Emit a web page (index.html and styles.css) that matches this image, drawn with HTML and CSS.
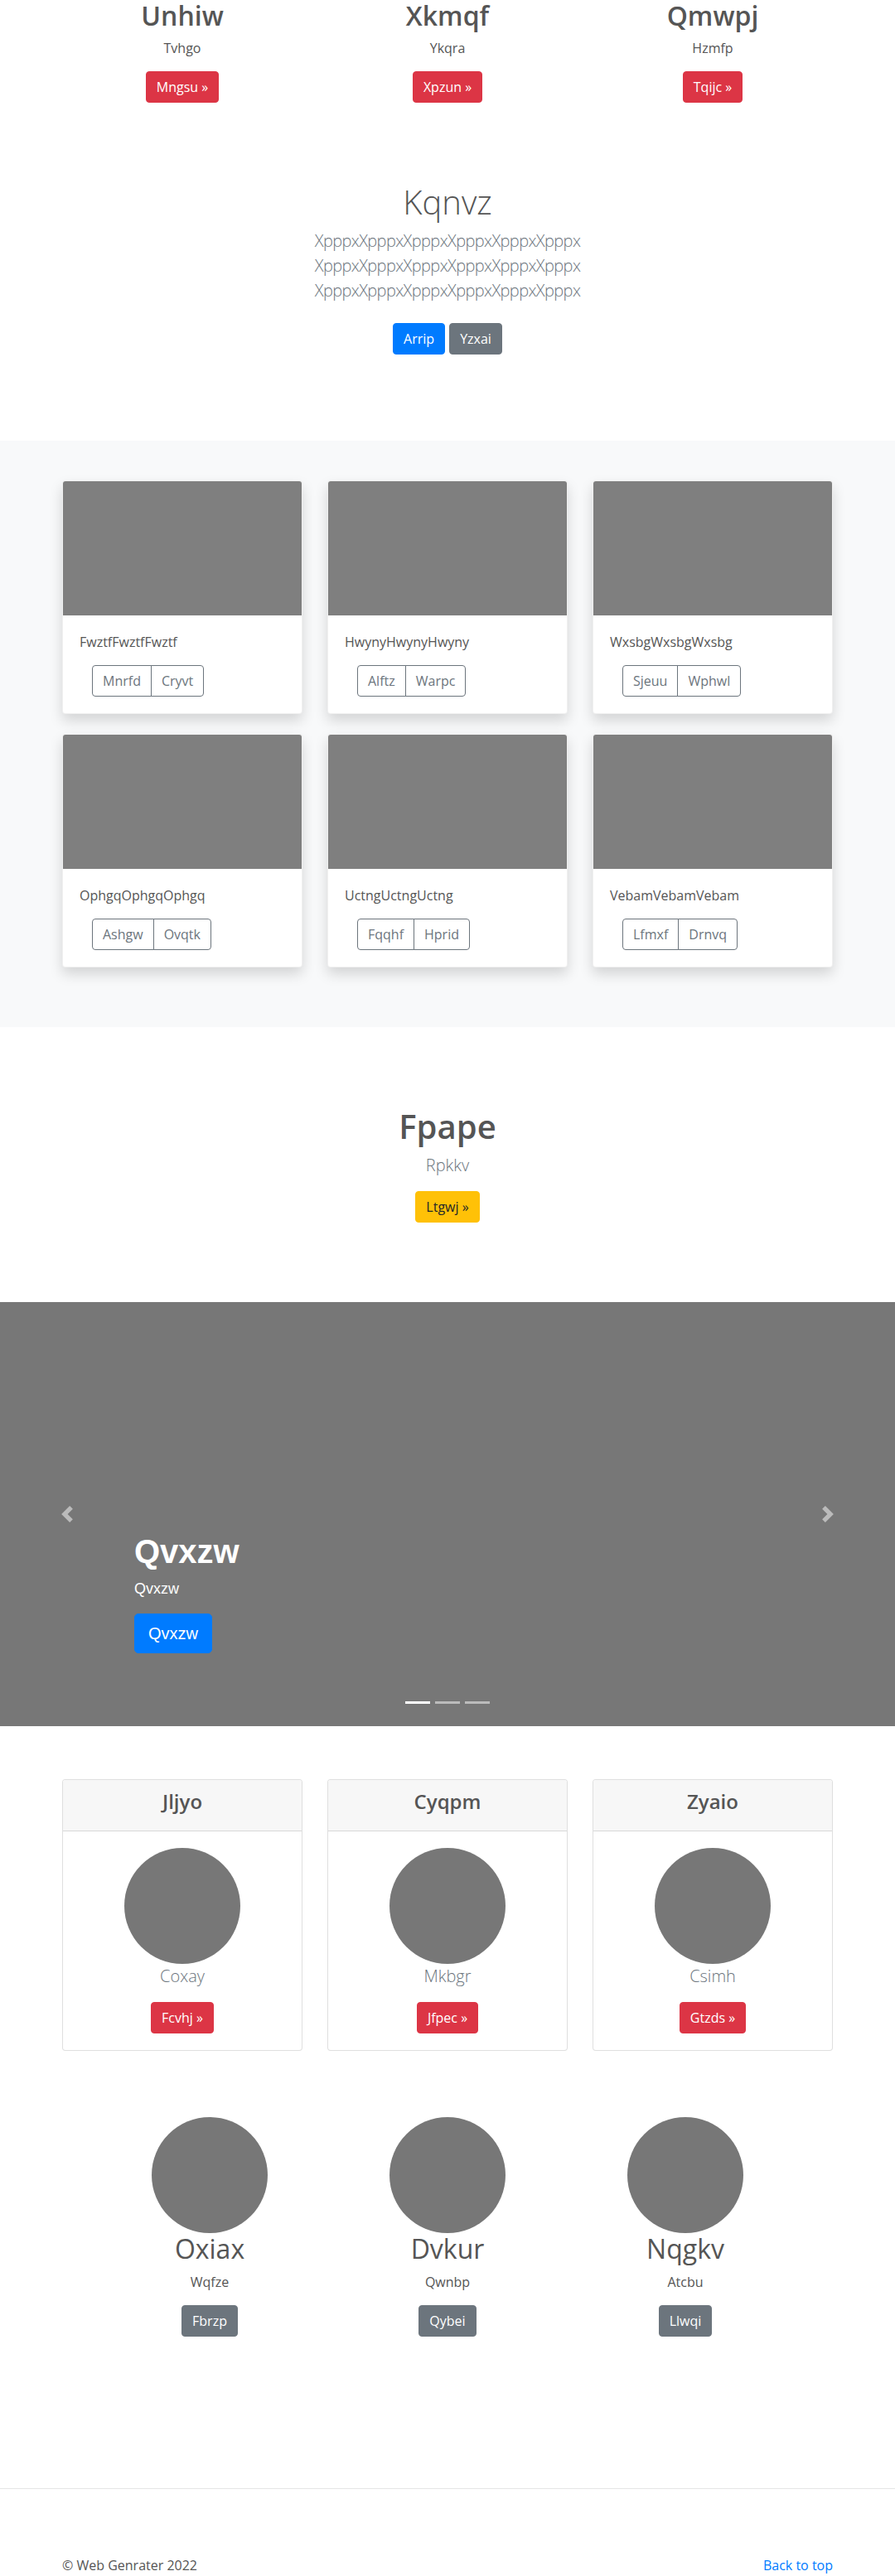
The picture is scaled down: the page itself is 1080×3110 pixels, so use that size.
FILE: index.html
```html
<!DOCTYPE html>
<html lang="en">
<head>
<meta charset="utf-8">
<title>Web Genrater</title>
<link rel="stylesheet" href="styles.css">
</head>
<body>
<section class="features">
  <div class="container grid3">
    <div class="feature">
      <h2 class="feature-title">Unhiw</h2>
      <p class="feature-text">Tvhgo</p>
      <p class="feature-action"><a class="btn btn-danger" href="#">Mngsu &raquo;</a></p>
    </div>
    <div class="feature">
      <h2 class="feature-title">Xkmqf</h2>
      <p class="feature-text">Ykqra</p>
      <p class="feature-action"><a class="btn btn-danger" href="#">Xpzun &raquo;</a></p>
    </div>
    <div class="feature">
      <h2 class="feature-title">Qmwpj</h2>
      <p class="feature-text">Hzmfp</p>
      <p class="feature-action"><a class="btn btn-danger" href="#">Tqijc &raquo;</a></p>
    </div>
  </div>
</section>

<section class="hero">
  <h1 class="hero-title">Kqnvz</h1>
  <p class="lead muted hero-lead">XpppxXpppxXpppxXpppxXpppxXpppx<br>XpppxXpppxXpppxXpppxXpppxXpppx<br>XpppxXpppxXpppxXpppxXpppxXpppx</p>
  <div class="hero-actions">
    <a class="btn btn-primary" href="#">Arrip</a>
    <a class="btn btn-secondary" href="#">Yzxai</a>
  </div>
</section>

<section class="album">
  <div class="container grid3 album-grid">
    <div class="card shadow-card">
      <div class="thumb"></div>
      <div class="card-body">
        <p class="card-text">FwztfFwztfFwztf</p>
        <div class="btn-group"><a class="btn btn-outline" href="#">Mnrfd</a><a class="btn btn-outline" href="#">Cryvt</a></div>
      </div>
    </div>
    <div class="card shadow-card">
      <div class="thumb"></div>
      <div class="card-body">
        <p class="card-text">HwynyHwynyHwyny</p>
        <div class="btn-group"><a class="btn btn-outline" href="#">Alftz</a><a class="btn btn-outline" href="#">Warpc</a></div>
      </div>
    </div>
    <div class="card shadow-card">
      <div class="thumb"></div>
      <div class="card-body">
        <p class="card-text">WxsbgWxsbgWxsbg</p>
        <div class="btn-group"><a class="btn btn-outline" href="#">Sjeuu</a><a class="btn btn-outline" href="#">Wphwl</a></div>
      </div>
    </div>
    <div class="card shadow-card">
      <div class="thumb"></div>
      <div class="card-body">
        <p class="card-text">OphgqOphgqOphgq</p>
        <div class="btn-group"><a class="btn btn-outline" href="#">Ashgw</a><a class="btn btn-outline" href="#">Ovqtk</a></div>
      </div>
    </div>
    <div class="card shadow-card">
      <div class="thumb"></div>
      <div class="card-body">
        <p class="card-text">UctngUctngUctng</p>
        <div class="btn-group"><a class="btn btn-outline" href="#">Fqqhf</a><a class="btn btn-outline" href="#">Hprid</a></div>
      </div>
    </div>
    <div class="card shadow-card">
      <div class="thumb"></div>
      <div class="card-body">
        <p class="card-text">VebamVebamVebam</p>
        <div class="btn-group"><a class="btn btn-outline" href="#">Lfmxf</a><a class="btn btn-outline" href="#">Drnvq</a></div>
      </div>
    </div>
  </div>
</section>

<section class="cta">
  <h1 class="cta-title">Fpape</h1>
  <p class="lead muted">Rpkkv</p>
  <a class="btn btn-warning" href="#">Ltgwj &raquo;</a>
</section>

<section class="carousel">
  <a class="carousel-control prev" href="#" aria-label="Previous">
    <svg width="20" height="20" viewBox="0 0 8 8"><path fill="#fff" d="M5.25 0l-4 4 4 4 1.5-1.5L4.25 4l2.5-2.5L5.25 0z"/></svg>
  </a>
  <a class="carousel-control next" href="#" aria-label="Next">
    <svg width="20" height="20" viewBox="0 0 8 8"><path fill="#fff" d="M2.75 0l-1.5 1.5L3.75 4l-2.5 2.5L2.75 8l4-4-4-4z"/></svg>
  </a>
  <div class="carousel-caption">
    <h1 class="caption-title">Qvxzw</h1>
    <p class="caption-text">Qvxzw</p>
    <p class="caption-action"><a class="btn btn-lg btn-primary caption-btn" href="#">Qvxzw</a></p>
  </div>
  <ol class="indicators">
    <li class="indicator active"></li>
    <li class="indicator"></li>
    <li class="indicator"></li>
  </ol>
</section>

<section class="pricing">
  <div class="container grid3">
    <div class="card">
      <div class="card-header"><h4 class="card-header-title">Jljyo</h4></div>
      <div class="card-body center">
        <div class="avatar"></div>
        <p class="lead muted">Coxay</p>
        <a class="btn btn-danger" href="#">Fcvhj &raquo;</a>
      </div>
    </div>
    <div class="card">
      <div class="card-header"><h4 class="card-header-title">Cyqpm</h4></div>
      <div class="card-body center">
        <div class="avatar"></div>
        <p class="lead muted">Mkbgr</p>
        <a class="btn btn-danger" href="#">Jfpec &raquo;</a>
      </div>
    </div>
    <div class="card">
      <div class="card-header"><h4 class="card-header-title">Zyaio</h4></div>
      <div class="card-body center">
        <div class="avatar"></div>
        <p class="lead muted">Csimh</p>
        <a class="btn btn-danger" href="#">Gtzds &raquo;</a>
      </div>
    </div>
  </div>
</section>

<section class="marketing">
  <div class="marketing-grid">
    <div class="person">
      <div class="avatar"></div>
      <h2 class="person-name">Oxiax</h2>
      <p class="person-text">Wqfze</p>
      <a class="btn btn-secondary" href="#">Fbrzp</a>
    </div>
    <div class="person">
      <div class="avatar"></div>
      <h2 class="person-name">Dvkur</h2>
      <p class="person-text">Qwnbp</p>
      <a class="btn btn-secondary" href="#">Qybei</a>
    </div>
    <div class="person">
      <div class="avatar"></div>
      <h2 class="person-name">Nqgkv</h2>
      <p class="person-text">Atcbu</p>
      <a class="btn btn-secondary" href="#">Llwqi</a>
    </div>
  </div>
</section>

<hr class="divider">
<footer class="footer">
  <p class="copy">&copy; Web Genrater 2022</p>
  <a class="back" href="#">Back to top</a>
</footer>
</body>
</html>
```

FILE: styles.css
```css
* { box-sizing: border-box; }

body {
  margin: 0;
  font-family: "Open Sans", "Noto Sans", sans-serif;
  font-size: 16px;
  line-height: 1.5;
  color: #555;
  background: #fff;
}

p { margin: 0; }
h1, h2, h4 { margin: 0; line-height: 1.2; }

.container {
  width: 960px;
  margin: 0 auto;
  padding: 0 15px;
}

.grid3 {
  display: grid;
  grid-template-columns: repeat(3, 1fr);
  column-gap: 30px;
}

/* Buttons */
.btn {
  display: inline-block;
  font-size: 16px;
  line-height: 24px;
  padding: 6px 12px;
  border: 1px solid transparent;
  border-radius: 4px;
  text-decoration: none;
  white-space: nowrap;
  vertical-align: middle;
}
.btn-lg {
  font-size: 20px;
  line-height: 30px;
  padding: 8px 16px;
  border-radius: 5px;
}
.btn-danger { background: #dc3545; border-color: #dc3545; color: #fff; }
.btn-primary { background: #007bff; border-color: #007bff; color: #fff; }
.btn-secondary { background: #6c757d; border-color: #6c757d; color: #fff; }
.btn-warning { background: #ffc107; border-color: #ffc107; color: #212529; }
.btn-outline { background: transparent; border-color: #6c757d; color: #6c757d; }

.muted { color: #6c757d; }
.lead { font-size: 20px; font-weight: 300; line-height: 30px; }

/* Features */
.feature { text-align: center; }
.feature-title { font-size: 32px; font-weight: 600; margin-bottom: 8px; }
.feature-text { margin-bottom: 16px; }
.feature-action { margin-bottom: 16px; }

/* Hero */
.hero {
  text-align: center;
  padding: 80px 0 96px;
}
.hero-title { font-size: 40px; font-weight: 300; margin-bottom: 8px; }
.hero-lead { margin-bottom: 16px; letter-spacing: -0.6px; }
.hero-actions {
  display: flex;
  justify-content: center;
  gap: 5px;
  padding: 8px 0;
}

/* Album */
.album {
  background: #f8f9fa;
  padding: 48px 0 72px;
}
.album-grid { row-gap: 24px; }

.card {
  background: #fff;
  border: 1px solid rgba(0, 0, 0, 0.125);
  border-radius: 4px;
  overflow: hidden;
}
.shadow-card {
  border-color: rgba(0, 0, 0, 0.06);
  box-shadow: 0 8px 16px rgba(0, 0, 0, 0.15);
}
.thumb {
  height: 162px;
  background: #7f7f7f;
}
.card-body { padding: 20px; }
.card-text { margin-bottom: 16px; }
.btn-group {
  display: flex;
  margin-left: 15px;
}
.btn-group .btn:first-child { border-top-right-radius: 0; border-bottom-right-radius: 0; }
.btn-group .btn:last-child { border-top-left-radius: 0; border-bottom-left-radius: 0; margin-left: -1px; }

/* CTA */
.cta {
  text-align: center;
  padding: 96px 0;
}
.cta-title { font-size: 40px; font-weight: 600; margin-bottom: 8px; }
.cta .lead { margin-bottom: 16px; }

/* Carousel */
.carousel {
  position: relative;
  height: 512px;
  background: #777;
  margin-bottom: 64px;
}
.carousel-control {
  position: absolute;
  top: 0;
  bottom: 0;
  width: 15%;
  display: flex;
  align-items: center;
  justify-content: center;
  opacity: 0.5;
}
.carousel-control.prev { left: 0; }
.carousel-control.next { right: 0; }
.carousel-caption {
  position: absolute;
  left: 15%;
  right: 15%;
  bottom: 52px;
  padding: 20px 0;
  color: #fff;
  font-family: "Liberation Sans", Arial, sans-serif;
}
.caption-title { font-size: 40px; font-weight: 700; margin-bottom: 8px; }
.caption-text { font-size: 18px; line-height: 27px; margin-bottom: 16px; }
.caption-action { margin-bottom: 16px; }
.caption-btn { font-family: "Liberation Sans", Arial, sans-serif; }
.indicators {
  position: absolute;
  left: 0;
  right: 0;
  bottom: 27px;
  margin: 0;
  padding: 0;
  list-style: none;
  display: flex;
  justify-content: center;
  gap: 6px;
}
.indicator {
  width: 30px;
  height: 3px;
  background: #fff;
  opacity: 0.5;
}
.indicator.active { opacity: 1; }

/* Pricing */
.card-header {
  background: #f7f7f7;
  border-bottom: 1px solid rgba(0, 0, 0, 0.125);
  padding: 12px 20px;
  text-align: center;
}
.card-header-title { font-size: 24px; font-weight: 600; margin-bottom: 8px; }
.center { text-align: center; }
.avatar {
  width: 140px;
  height: 140px;
  border-radius: 50%;
  background: #777;
  margin: 0 auto;
}
.pricing .lead { margin-bottom: 16px; }

/* Marketing */
.marketing { padding-top: 80px; padding-bottom: 183px; }
.marketing-grid {
  width: 861px;
  margin: 0 auto;
  display: grid;
  grid-template-columns: repeat(3, 1fr);
}
.person { text-align: center; }
.person-name { font-size: 32px; font-weight: 400; margin-bottom: 8px; }
.person-text { margin-bottom: 16px; }

/* Footer */
.divider {
  margin: 0;
  border: 0;
  border-top: 1px solid rgba(0, 0, 0, 0.1);
}
.footer {
  width: 960px;
  margin: 0 auto;
  padding: 80px 15px 0;
  display: flex;
  justify-content: space-between;
  align-items: flex-start;
}
.back { color: #007bff; text-decoration: none; }
```
